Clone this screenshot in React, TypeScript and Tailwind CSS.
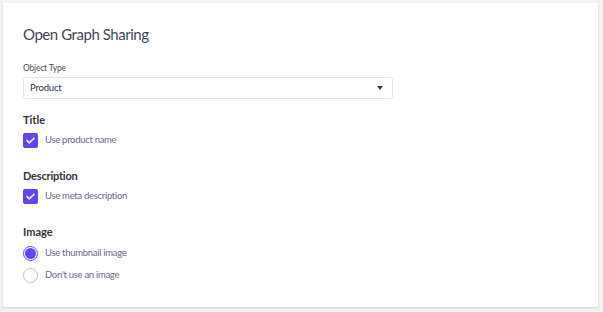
import React from "react";

const font = { fontFamily: "Lato, 'Noto Sans', sans-serif" };

function Check({ label }: { label: string }) {
  return (
    <div className="flex items-center gap-[7px] mt-[6px]">
      <div className="w-[15px] h-[15px] rounded-[2px] bg-[#6045f3] flex items-center justify-center">
        <svg width="9" height="7" viewBox="0 0 9 7" fill="none">
          <path d="M1 3.6 L3.4 5.8 L8 1.2" stroke="white" strokeWidth="1.6" strokeLinecap="round" strokeLinejoin="round" />
        </svg>
      </div>
      <span className="text-[9.5px] tracking-[-0.3px] text-[#686c80]">{label}</span>
    </div>
  );
}

function Radio({ label, checked }: { label: string; checked?: boolean }) {
  return (
    <div className="flex items-center gap-[7px] h-[16px]">
      <div
        className={
          checked
            ? "w-[15px] h-[15px] rounded-full border border-[#6045f3] flex items-center justify-center"
            : "w-[15px] h-[15px] rounded-full border border-[#c0c2cc] bg-white"
        }
      >
        {checked && <div className="w-[11px] h-[11px] rounded-full bg-[#6045f3]" />}
      </div>
      <span className="text-[9.5px] tracking-[-0.3px] text-[#686c80]">{label}</span>
    </div>
  );
}

export default function App() {
  return (
    <div className="w-[603px] h-[312px] bg-[#f3f3f6] pt-[3px] pl-[3px] pr-[5px] pb-[5px]" style={font}>
      <div className="w-full h-full bg-white shadow-[0_1px_2px_rgba(0,0,0,0.15)] pl-[20px] pt-[21px]">
        <div className="text-[15px] leading-[20px] tracking-[-0.45px] text-[#42455a]">Open Graph Sharing</div>
        <div className="mt-[19px] text-[8.5px] leading-[11px] tracking-[-0.2px] text-[#4a4e60]">Object Type</div>
        <div className="mt-[3px] w-[370px] h-[22px] border border-[#e2e3ec] rounded-[3px] flex items-center justify-between pl-[6px] pr-[9px]">
          <span className="text-[9.5px] tracking-[-0.2px] text-[#313440]">Product</span>
          <svg width="6" height="4" viewBox="0 0 6 4">
            <path d="M0 0 L6 0 L3 4 Z" fill="#3c3f58" />
          </svg>
        </div>
        <div className="mt-[14px] text-[11px] leading-[14px] font-bold text-[#313440]">Title</div>
        <Check label="Use product name" />
        <div className="mt-[21px] text-[11px] leading-[14px] font-bold tracking-[-0.2px] text-[#313440]">Description</div>
        <Check label="Use meta description" />
        <div className="mt-[21px] text-[11px] leading-[14px] font-bold text-[#313440]">Image</div>
        <div className="mt-[6px] flex flex-col gap-[6px]">
          <Radio label="Use thumbnail image" checked />
          <Radio label="Don't use an image" />
        </div>
      </div>
    </div>
  );
}
